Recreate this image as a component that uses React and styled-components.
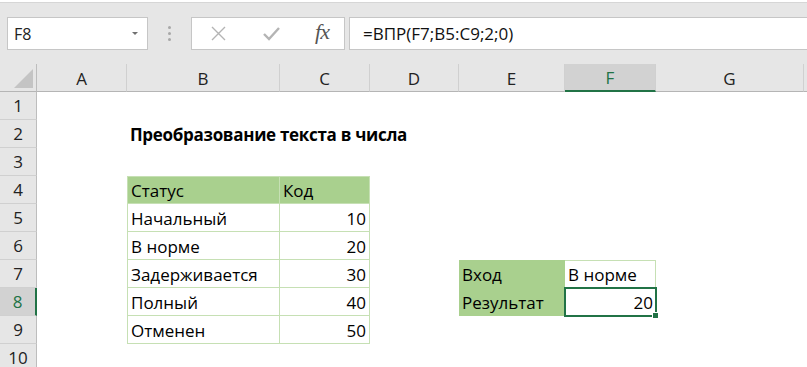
import React from 'react'
import styled, { createGlobalStyle, css } from 'styled-components'

const GREEN = '#a9d08e'
const LINE = '#c6e0b4'
const ACCENT = '#217346'

const columns = [
    { key: 'A', width: 90 },
    { key: 'B', width: 153 },
    { key: 'C', width: 90 },
    { key: 'D', width: 89 },
    { key: 'E', width: 106 },
    { key: 'F', width: 91 },
    { key: 'G', width: 148 },
]

const statuses = [
    ['Начальный', 10],
    ['В норме', 20],
    ['Задерживается', 30],
    ['Полный', 40],
    ['Отменен', 50],
]

// cell contents, keyed by address
const cells = {
    B2: { text: 'Преобразование текста в числа', bold: true },
    B4: { text: 'Статус', fill: GREEN, bt: true, bl: true, br: true, bb: true },
    C4: { text: 'Код', fill: GREEN, bt: true, br: true, bb: true },
    E7: { text: 'Вход', fill: GREEN },
    F7: { text: 'В норме', bt: true, br: true, bb: true },
    E8: { text: 'Результат', fill: GREEN },
    F8: { text: '20', right: true, selected: true },
}
statuses.forEach(([name, code], i) => {
    const row = i + 5
    cells['B' + row] = { text: name, bl: true, br: true, bb: true }
    cells['C' + row] = { text: String(code), right: true, br: true, bb: true }
})

const GlobalStyle = createGlobalStyle`
    body{
        margin: 0;
        background: #fff;
        font-family: "Open Sans", Lato, "Liberation Sans", sans-serif;
        color: #000;
    }
`

const Page = styled.div`
    width: 807px;
    height: 367px;
    overflow: hidden;
    display: flex;
    flex-direction: column;
`

const Toolbar = styled.div`
    height: 62px;
    flex-shrink: 0;
    box-sizing: border-box;
    background: #e6e6e6;
    border-top: 1px solid #d6d6d6;
    margin-top: 2px;
    display: flex;
    align-items: flex-start;
    padding: 14px 0 0 7px;
`

const Box = styled.div`
    height: 33px;
    box-sizing: border-box;
    background: #fff;
    border: 1px solid #c6c6c6;
    display: flex;
    align-items: center;
`

const NameBox = styled(Box)`
    width: 141px;
    padding: 0 9px 0 6px;
    justify-content: space-between;
    font-size: 16px;
    color: #222;
`

const Caret = styled.span`
    width: 0;
    height: 0;
    border-left: 3px solid transparent;
    border-right: 3px solid transparent;
    border-top: 3px solid #707070;
`

const Grip = styled.div`
    width: 43px;
    height: 33px;
    display: flex;
    flex-direction: column;
    align-items: center;
    justify-content: center;
    gap: 3px;
    span{
        width: 3px;
        height: 3px;
        border-radius: 50%;
        background: #a8a8a8;
    }
`

const FxBox = styled(Box)`
    width: 154px;
    padding: 0 15px 0 18px;
    justify-content: space-between;
`

const Fx = styled.span`
    font-family: "Liberation Serif", "DejaVu Serif", serif;
    font-style: italic;
    font-size: 22px;
    color: #555;
    letter-spacing: -1px;
    margin-top: -3px;
`

const FormulaBox = styled(Box)`
    flex: 1;
    margin-left: 4px;
    border-right: none;
    padding-left: 13px;
    font-size: 17px;
    color: #111;
`

const Sheet = styled.div`
    display: grid;
    grid-template-columns: 37px ${columns.map((c) => c.width + 'px').join(' ')} 1fr;
    grid-auto-rows: 28px;
`

const Corner = styled.div`
    background: #e6e6e6;
    border-right: 1px solid #bdbdbd;
    border-bottom: 1px solid #b5b5b5;
    display: flex;
    align-items: flex-end;
    justify-content: flex-end;
    padding: 0 3px 3px 0;
    &::after{
        content: '';
        width: 0;
        height: 0;
        border-left: 19px solid transparent;
        border-bottom: 19px solid #c4c4c4;
    }
`

const ColHeader = styled.div`
    background: ${(p) => (p.$active ? '#d2d2d2' : '#e6e6e6')};
    border-right: 1px solid #d0d0d0;
    border-bottom: ${(p) => (p.$active ? `2px solid ${ACCENT}` : '1px solid #b5b5b5')};
    color: ${(p) => (p.$active ? ACCENT : '#222')};
    display: flex;
    align-items: center;
    justify-content: center;
    font-size: 17px;
    padding-top: 1px;
`

const RowHeader = styled.div`
    background: ${(p) => (p.$active ? '#d2d2d2' : '#e6e6e6')};
    border-bottom: 1px solid #d0d0d0;
    border-right: ${(p) => (p.$active ? `2px solid ${ACCENT}` : '1px solid #bdbdbd')};
    color: ${(p) => (p.$active ? ACCENT : '#222')};
    display: flex;
    align-items: center;
    justify-content: center;
    font-size: 17px;
`

const Filler = styled.div`
    background: #e6e6e6;
    border-bottom: 1px solid #b5b5b5;
`

const Cell = styled.div`
    position: relative;
    box-sizing: border-box;
    background: ${(p) => p.$fill || 'transparent'};
    border-top: ${(p) => (p.$bt ? `1px solid ${LINE}` : 'none')};
    border-left: ${(p) => (p.$bl ? `1px solid ${LINE}` : 'none')};
    border-right: ${(p) => (p.$br ? `1px solid ${LINE}` : 'none')};
    border-bottom: ${(p) => (p.$bb ? `1px solid ${LINE}` : 'none')};
    display: flex;
    align-items: center;
    justify-content: ${(p) => (p.$right ? 'flex-end' : 'flex-start')};
    padding: 1px 3px 0;
    font-size: 17px;
    font-weight: ${(p) => (p.$bold ? 700 : 400)};
    letter-spacing: ${(p) => (p.$bold ? '-0.3px' : '0')};
    white-space: nowrap;
    ${(p) => p.$selected && css`
        z-index: 2;
        &::after{
            content: '';
            position: absolute;
            inset: -1px;
            border: 2px solid ${ACCENT};
        }
        &::before{
            content: '';
            position: absolute;
            right: -3px;
            bottom: -3px;
            width: 5px;
            height: 5px;
            background: ${ACCENT};
            border: 1px solid #fff;
            z-index: 1;
        }
    `}
`

function CrossIcon() {
    return (
        <svg width="17" height="17" viewBox="0 0 17 17">
            <path d="M2 2L15 15M15 2L2 15" stroke="#b4b4b4" strokeWidth="1.4" fill="none" />
        </svg>
    )
}

function CheckIcon() {
    return (
        <svg width="19" height="17" viewBox="0 0 19 17">
            <path d="M2 9L7 14L17 3" stroke="#b4b4b4" strokeWidth="2.4" fill="none" />
        </svg>
    )
}

function App() {
    const activeCol = 'F'
    const activeRow = 8
    return (
        <Page>
            <GlobalStyle />
            <Toolbar>
                <NameBox>
                    F8
                    <Caret />
                </NameBox>
                <Grip>
                    <span /><span /><span />
                </Grip>
                <FxBox>
                    <CrossIcon />
                    <CheckIcon />
                    <Fx>fx</Fx>
                </FxBox>
                <FormulaBox>=ВПР(F7;B5:C9;2;0)</FormulaBox>
            </Toolbar>
            <Sheet>
                <Corner />
                {columns.map((c) => (
                    <ColHeader key={c.key} $active={c.key === activeCol}>{c.key}</ColHeader>
                ))}
                <Filler />
                {Array.from({ length: 10 }, (_, i) => i + 1).map((row) => (
                    <React.Fragment key={row}>
                        <RowHeader $active={row === activeRow}>{row}</RowHeader>
                        {columns.map((c) => {
                            const cell = cells[c.key + row] || {}
                            return (
                                <Cell
                                    key={c.key}
                                    $fill={cell.fill}
                                    $bt={cell.bt}
                                    $bl={cell.bl}
                                    $br={cell.br}
                                    $bb={cell.bb}
                                    $right={cell.right}
                                    $bold={cell.bold}
                                    $selected={cell.selected}
                                >
                                    {cell.text}
                                </Cell>
                            )
                        })}
                        <Cell />
                    </React.Fragment>
                ))}
            </Sheet>
        </Page>
    )
}

export default App
